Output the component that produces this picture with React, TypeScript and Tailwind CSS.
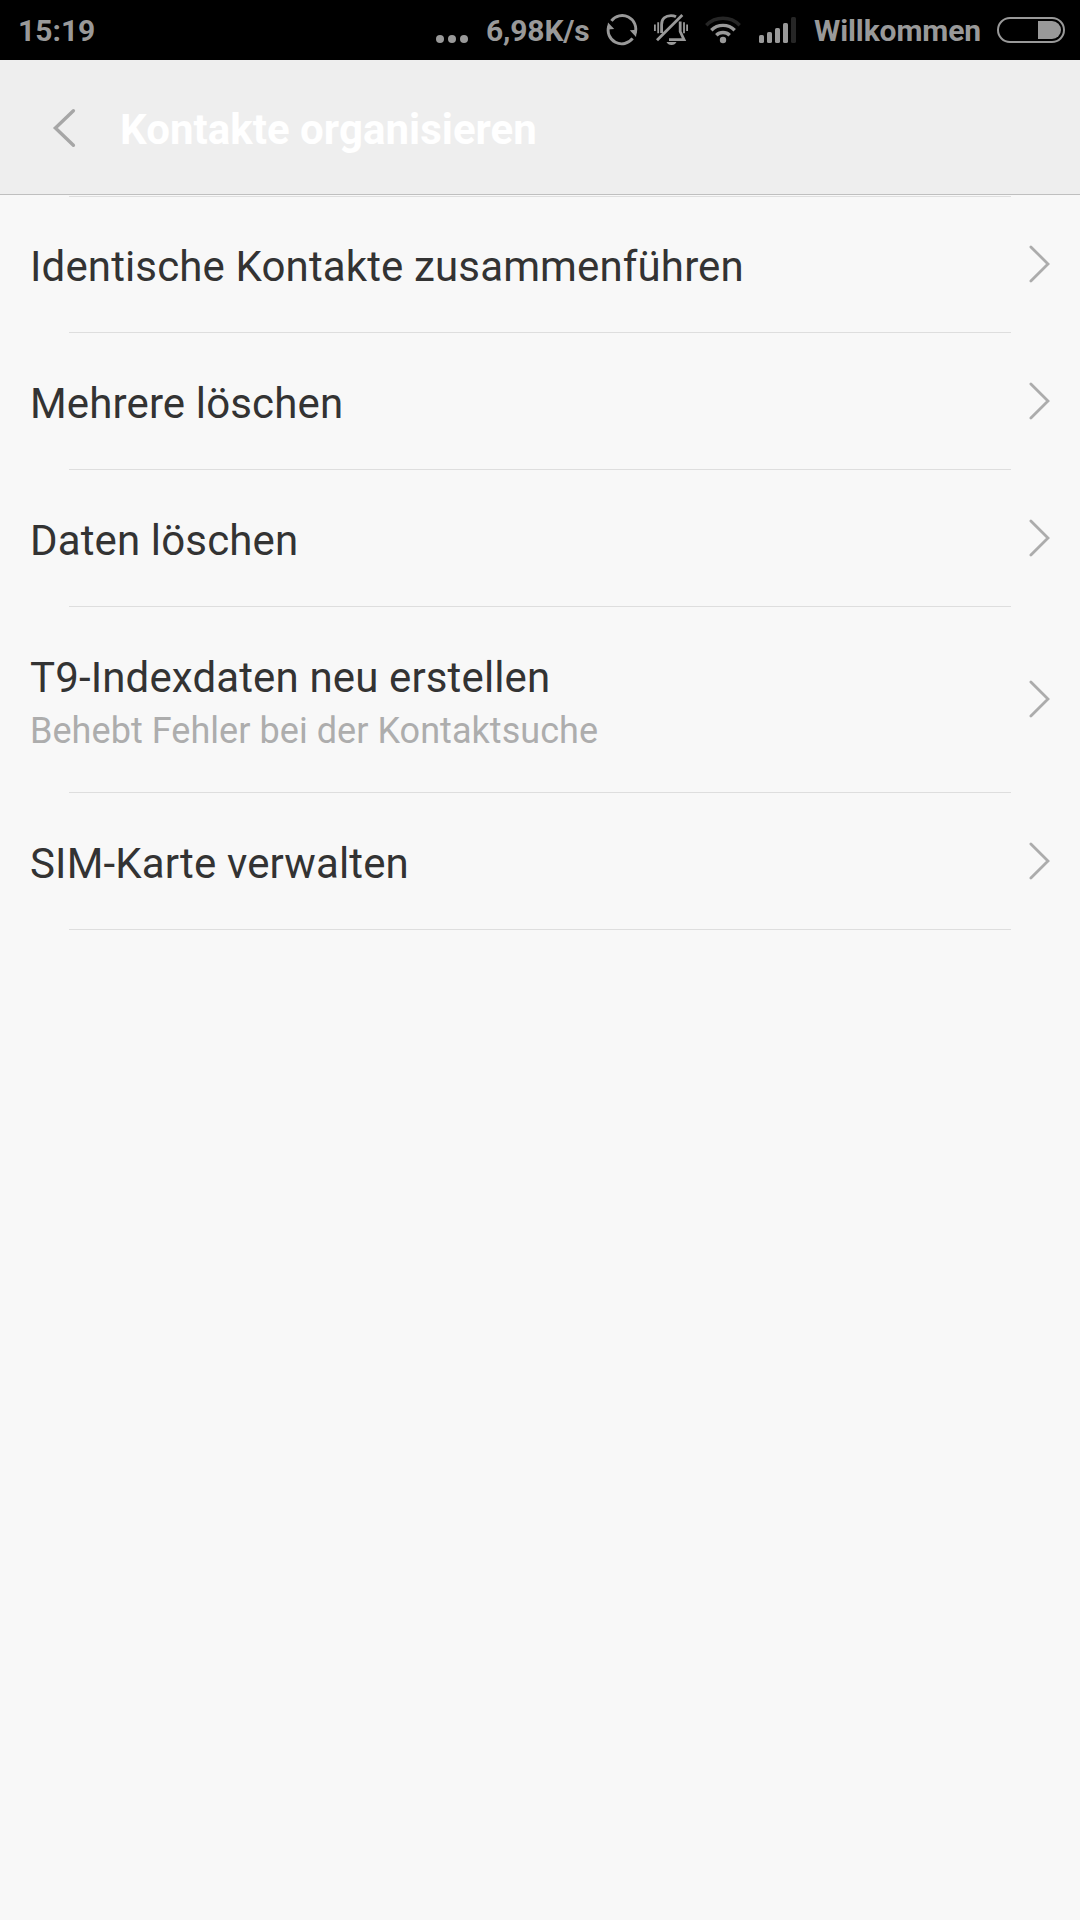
type Item = { title: string; detail?: string };

const ITEMS: Item[] = [
  { title: "Identische Kontakte zusammenführen" },
  { title: "Mehrere löschen" },
  { title: "Daten löschen" },
  { title: "T9-Indexdaten neu erstellen", detail: "Behebt Fehler bei der Kontaktsuche" },
  { title: "SIM-Karte verwalten" },
];

function Dots() {
  return (
    <svg className="h-[60px] w-8 shrink-0" viewBox="0 0 32 60" fill="#999">
      <circle cx="4" cy="39" r="4" />
      <circle cx="16" cy="39" r="4" />
      <circle cx="28" cy="39" r="4" />
    </svg>
  );
}

function SyncIcon() {
  return (
    <svg className="ml-[17px] h-[60px] w-8 shrink-0" viewBox="606 0 32 60" fill="none" stroke="#999" strokeWidth="2.9">
      <path d="M611.4 20.8A13.6 13.6 0 0 1 635.2 33" />
      <path d="M632.6 38.4A13.6 13.6 0 0 1 608.8 26" />
      <path d="M629.8 30.2L637 29.8L636 37Z" fill="#999" stroke="none" />
      <path d="M614.2 29L607 29.5L608 22.5Z" fill="#999" stroke="none" />
    </svg>
  );
}

function MutedBell() {
  return (
    <svg className="ml-[15px] h-[60px] w-9 shrink-0" viewBox="653 0 36 60" fill="none" stroke="#999" strokeWidth="2.8">
      <path d="M661.6 33V24.5C661.6 18.8 665.7 15.6 671 15.6C672.9 15.6 674.6 16 676 16.8" />
      <path d="M680.2 21.5V31.5L684 39.6H669" />
      <path d="M657 40.3L682.3 15" strokeWidth="2.8" />
      <path d="M666.5 42H676.5C675.5 44 674 45 671.5 45C669 45 667.5 44 666.5 42Z" fill="#999" stroke="none" />
      <path d="M654.9 24.5V31M658.2 22.3V33.3M684 22.3V33.3M687.1 24.5V31" strokeWidth="1.8" />
    </svg>
  );
}

function WifiIcon() {
  return (
    <svg className="ml-[15px] h-[60px] w-[38px] shrink-0" viewBox="704 0 38 60" fill="none" stroke="#999" strokeWidth="3.4">
      <path d="M706.3 25.2A23.5 23.5 0 0 1 739.7 25.2" stroke="#262626" />
      <path d="M711.3 30.3A16.4 16.4 0 0 1 734.7 30.3" />
      <path d="M716.3 35.3A9.4 9.4 0 0 1 729.7 35.3" />
      <circle cx="723" cy="40" r="3.2" fill="#999" stroke="none" />
    </svg>
  );
}

function SignalIcon() {
  return (
    <svg className="ml-[17px] h-[60px] w-[37px] shrink-0" viewBox="759 0 37 60" fill="#999">
      <rect x="759" y="35" width="5" height="8" rx="1.6" />
      <rect x="767" y="32" width="5" height="11" rx="1.6" />
      <rect x="775" y="28" width="5" height="15" rx="1.6" />
      <rect x="783" y="23" width="5" height="20" rx="1.6" />
      <rect x="791" y="17" width="5" height="26" rx="1.6" fill="#262626" />
    </svg>
  );
}

function Battery() {
  return (
    <div className="mr-[15px] ml-auto flex h-[26px] w-[68px] items-center justify-end rounded-full border-2 border-[#999] pr-[2px]">
      <div className="h-[18px] w-[23px] rounded-r-full bg-[#999]" />
    </div>
  );
}

function StatusBar() {
  return (
    <div className="flex h-[60px] items-center bg-black text-[30px] leading-[60px] font-bold whitespace-nowrap text-[#999]">
      <span className="ml-[18px] w-[418px] pt-[2px]">15:19</span>
      <Dots />
      <span className="ml-[18px] w-[103px] pt-[2px] tracking-[-0.15px]">6,98K/s</span>
      <SyncIcon />
      <MutedBell />
      <WifiIcon />
      <SignalIcon />
      <span className="ml-[18px] pt-[2px] tracking-[-0.1px]">Willkommen</span>
      <Battery />
    </div>
  );
}

function Header() {
  return (
    <header className="flex h-[135px] items-center border-b border-[#bfbfbf] bg-[#eee]">
      <svg className="mt-[2px] ml-[52px] h-10 w-6" viewBox="0 0 24 40" fill="none" stroke="#a6a6a6" strokeWidth="3.4" strokeLinecap="round">
        <path d="M21.4 2.7L3.4 20L21.4 37.3" />
      </svg>
      <h1 className="mt-[5px] ml-11 text-[42px] leading-[50px] font-bold tracking-[0.03px] text-white">Kontakte organisieren</h1>
    </header>
  );
}

function Row({ title, detail }: Item) {
  return (
    <li>
      <div className={`flex items-center justify-between pr-[30px] pl-[30px] ${detail ? "h-[185px]" : "h-[136px]"}`}>
        <div className={detail ? "pt-1" : "pt-[6px]"}>
          <p className="text-[42px] leading-[58px] tracking-[0.14px] text-[#333]">{title}</p>
          {detail && <p className="text-[36px] leading-[48px] tracking-[0.05px] text-[#adadad]">{detail}</p>}
        </div>
        <svg className="mb-px h-10 w-[21px]" viewBox="0 0 21 40" fill="none" stroke="#acacac" strokeWidth="2.8" strokeLinecap="round">
          <path d="M1.9 2.9L19 20L1.9 37.1" />
        </svg>
      </div>
      <div className="mr-[69px] ml-[69px] h-px bg-[#dedede]" />
    </li>
  );
}

export default function App() {
  return (
    <div className="min-h-[1920px] w-[1080px] bg-[#f8f8f8] font-[Roboto,sans-serif]">
      <StatusBar />
      <Header />
      <ul className="pt-px">
        <li className="mx-[69px] -mb-px h-px bg-[#dedede]" />
        {ITEMS.map((item) => (
          <Row key={item.title} {...item} />
        ))}
      </ul>
    </div>
  );
}
